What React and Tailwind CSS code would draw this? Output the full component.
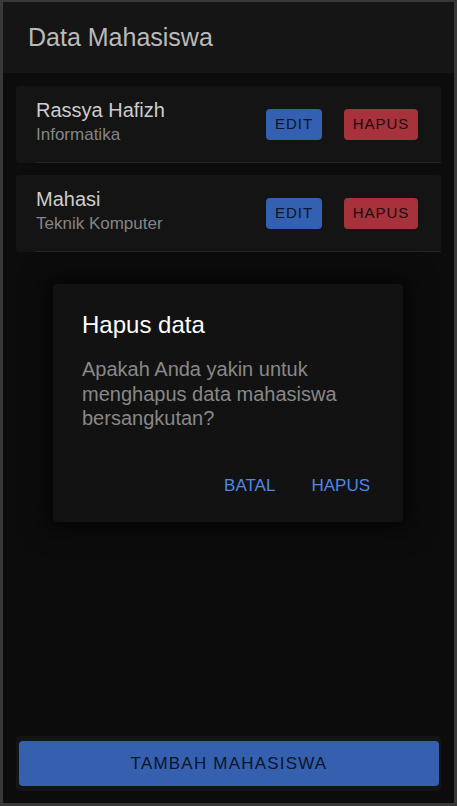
import React from "react";

const students = [
  { name: "Rassya Hafizh", major: "Informatika" },
  { name: "Mahasi", major: "Teknik Komputer" },
];

export default function App() {
  return (
    <div
      className="relative w-[457px] h-[806px] border-[3px] border-t-[2px] border-[#383838] bg-[#0c0c0c] flex flex-col overflow-hidden font-['Liberation_Sans',Arial,sans-serif]"
    >
      <header className="h-[71px] bg-[#151515] flex items-center pl-[25px] shrink-0">
        <h1 className="text-[25px] leading-none text-[#bababa]">Data Mahasiswa</h1>
      </header>

      <main className="flex flex-col gap-[12px] px-[13px] pt-[13px]">
        {students.map((s) => (
          <div
            key={s.name}
            className="relative h-[77px] rounded-[4px] bg-[#141414] flex items-center pl-[20px] pr-[23px]"
          >
            <div className="flex-1 flex flex-col self-start pt-[12px]">
              <span className="text-[20px] leading-[25px] text-[#cdcdcd]">{s.name}</span>
              <span className="mt-[2px] text-[17px] leading-[20px] text-[#858585]">{s.major}</span>
            </div>
            <div className="flex items-center gap-[22px]">
              <button className="w-[56px] h-[31px] rounded-[4px] bg-[#3360b0] text-[15px] tracking-[1px] text-[#0e1626]">
                EDIT
              </button>
              <button className="w-[74px] h-[31px] rounded-[4px] bg-[#a8323c] text-[15px] tracking-[1px] text-[#1c0a0c]">
                HAPUS
              </button>
            </div>
            <div className="absolute left-[20px] right-0 bottom-0 h-px bg-[#262626]" />
          </div>
        ))}
      </main>

      <div className="flex-1" />

      <div className="mx-[13px] mb-[12px] h-[55px] rounded-[4px] bg-[#141414] pl-[3px] pr-[2px] py-[5px] shrink-0">
        <button className="w-full h-full rounded-[4px] bg-[#3560b0] text-[17px] tracking-[1.2px] text-[#0d1526]">
          TAMBAH MAHASISWA
        </button>
      </div>

      <div className="absolute left-[50px] top-[282px] w-[350px] h-[238px] rounded-[4px] bg-[#121212] shadow-[0_0_24px_8px_rgba(0,0,0,0.6)] flex flex-col pl-[29px] pr-[33px] pt-[27px]">
        <h2 className="text-[24px] leading-[28px] text-white">Hapus data</h2>
        <p className="mt-[18px] text-[20px] leading-[24.5px] text-[#888888]">
          Apakah Anda yakin untuk menghapus data mahasiswa bersangkutan?
        </p>
        <div className="mt-auto mb-[26px] flex justify-end gap-[36px]">
          <button className="text-[17px] leading-[20px] text-[#4f86e8]">BATAL</button>
          <button className="text-[17px] leading-[20px] text-[#4f86e8]">HAPUS</button>
        </div>
      </div>
    </div>
  );
}
